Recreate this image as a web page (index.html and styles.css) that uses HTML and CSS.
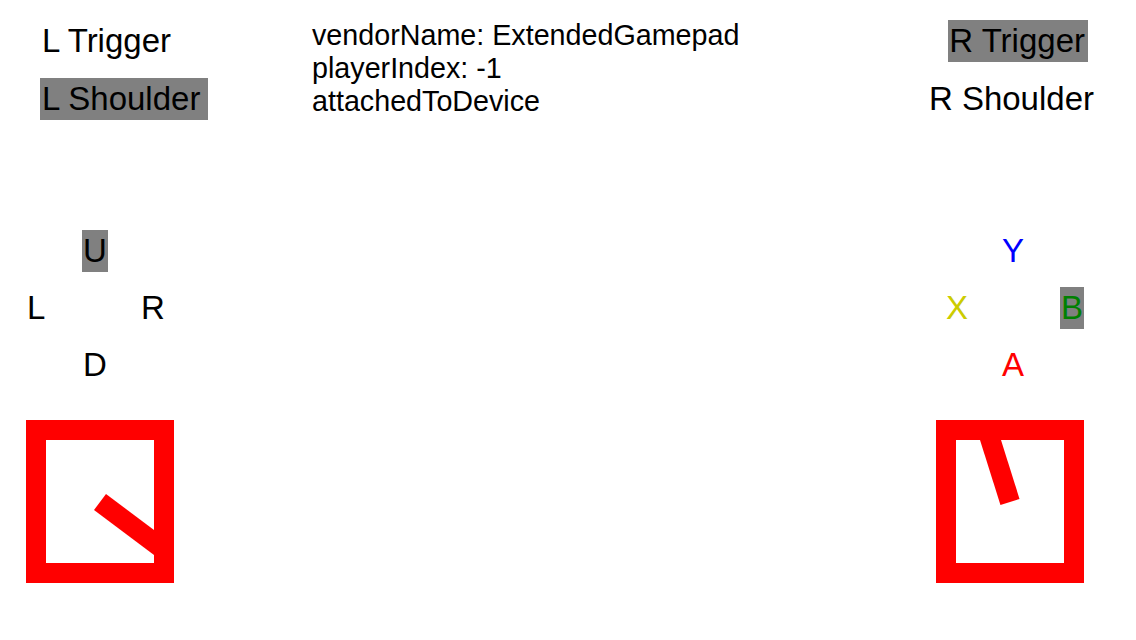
FILE: index.html
```html
<!DOCTYPE html>
<html>
<head>
<meta charset="utf-8">
<link rel="stylesheet" href="styles.css">
</head>
<body>
<div class="page">
  <div class="top">
    <div class="side side-left">
      <span class="label">L Trigger</span>
      <span class="label label-on label-lshoulder">L Shoulder</span>
    </div>
    <div class="info">
      <div>vendorName: ExtendedGamepad</div>
      <div>playerIndex: -1</div>
      <div>attachedToDevice</div>
    </div>
    <div class="side side-right">
      <span class="label label-on label-rtrigger">R Trigger</span>
      <span class="label">R Shoulder</span>
    </div>
  </div>

  <div class="pads">
    <div class="dpad">
      <span class="label key c2 r1 label-on">U</span>
      <span class="label key c1 r2">L</span>
      <span class="label key c3 r2">R</span>
      <span class="label key c2 r3">D</span>
    </div>
    <div class="abxy">
      <span class="label key c2 r1 btn-y">Y</span>
      <span class="label key c1 r2 btn-x">X</span>
      <span class="label key c3 r2 btn-b label-on">B</span>
      <span class="label key c2 r3 btn-a">A</span>
    </div>
  </div>

  <div class="sticks">
    <svg class="stick" width="148" height="163" viewBox="0 0 148 163">
      <line x1="74" y1="82" x2="138" y2="130" stroke="#ff0000" stroke-width="20"/>
      <rect x="10" y="10" width="128" height="143" fill="none" stroke="#ff0000" stroke-width="20"/>
    </svg>
    <svg class="stick" width="148" height="163" viewBox="0 0 148 163">
      <line x1="74" y1="82" x2="50" y2="5.7" stroke="#ff0000" stroke-width="20"/>
      <rect x="10" y="10" width="128" height="143" fill="none" stroke="#ff0000" stroke-width="20"/>
    </svg>
  </div>
</div>
</body>
</html>
```

FILE: styles.css
```css
html, body {
  margin: 0;
  padding: 0;
  background: #ffffff;
}

.page {
  width: 1136px;
  height: 640px;
  box-sizing: border-box;
  padding-top: 20px;
  display: flex;
  flex-direction: column;
  font-family: "Liberation Sans", Arial, sans-serif;
  color: #000000;
  overflow: hidden;
}

.top {
  display: grid;
  grid-template-columns: 272px 1fr auto;
  padding: 0 40px;
  height: 100px;
  margin-bottom: 110px;
}

.side {
  display: flex;
  flex-direction: column;
  gap: 16px;
}

.side-left {
  align-items: flex-start;
}

.side-right {
  align-items: flex-end;
}

.label {
  display: inline-block;
  font-size: 33px;
  line-height: 42px;
  height: 42px;
  padding: 0 2px;
  white-space: nowrap;
}

.label-on {
  background: #808080;
}

.label-lshoulder {
  padding: 0 8px 0 2px;
}

.label-rtrigger {
  margin-right: 8px;
  padding: 0 3px 0 1px;
}

.info {
  font-size: 28.7px;
  line-height: 33px;
  margin-top: -1px;
  white-space: nowrap;
}

.pads {
  display: flex;
  justify-content: space-between;
  padding: 0 52px 0 26px;
  margin-bottom: 34px;
}

.dpad,
.abxy {
  display: grid;
  grid-template-rows: 42px 42px 42px;
  row-gap: 15px;
}

.dpad {
  grid-template-columns: 56px 58px auto;
}

.abxy {
  grid-template-columns: 56px 59px auto;
}

.key {
  justify-self: start;
  padding: 0 1px;
}

.c1 { grid-column: 1; }
.c2 { grid-column: 2; }
.c3 { grid-column: 3; }
.r1 { grid-row: 1; }
.r2 { grid-row: 2; }
.r3 { grid-row: 3; }

.btn-y { color: #0000ff; }
.btn-x { color: #cccc00; }
.btn-b { color: #008000; }
.btn-a { color: #ff0000; }

.sticks {
  display: flex;
  justify-content: space-between;
  padding: 0 52px 0 26px;
}

.stick {
  display: block;
}
```
